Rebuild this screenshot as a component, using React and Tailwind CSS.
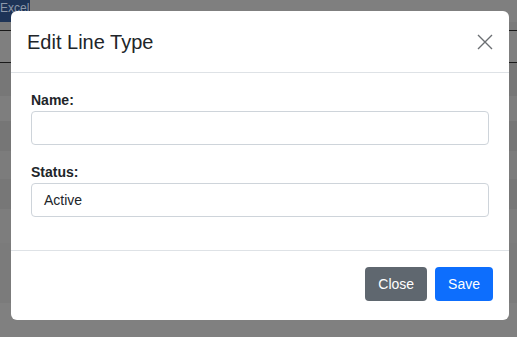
import React from "react";

export default function App() {
  const rows = [
    "bg-[#777777] h-[33px]",
    "bg-[#7e7e7e] h-[25px]",
    "bg-[#767676] h-[30px]",
    "bg-[#7c7c7c] h-[28px]",
    "bg-[#777777] h-[30px]",
    "bg-[#7d7d7d] h-[34px]",
    "bg-[#7b7b7b] h-[60px]",
  ];
  return (
    <div
      className="relative w-[517px] h-[337px] overflow-hidden bg-[#808080] text-[#212529]"
      style={{ fontFamily: '"Liberation Sans", Arial, Helvetica, sans-serif' }}
    >
      {/* background page (dimmed) */}
      <div className="flex flex-col">
        <div className="flex h-[22px] bg-[#7f7f7f]">
          <div className="w-[30px] h-[22px] bg-[#1e3457] text-[#8d98aa] text-[12px] leading-[16px] overflow-hidden whitespace-nowrap pl-[0px]">
            Excel
          </div>
        </div>
        <div className="h-[8px] bg-[#7a7a7a]" />
        <div className="h-[1px] bg-[#1a1a1a]" />
        <div className="h-[31px] bg-[#7f7f7f]" />
        <div className="h-[1px] bg-[#1a1a1a]" />
        {rows.map((r, i) => (
          <div key={i} className={r} />
        ))}
      </div>

      {/* modal */}
      <div className="absolute left-[11px] top-[11px] w-[498px] h-[309px] bg-white rounded-[6px] flex flex-col">
        <div className="h-[62px] flex items-center justify-between pl-[16px] pr-[16px] border-b border-[#dee2e6]">
          <h5 className="text-[20px] leading-[30px] font-normal">Edit Line Type</h5>
          <button className="w-[16px] h-[16px] flex items-center justify-center mr-[0px]">
            <svg width="16" height="16" viewBox="0 0 16 16">
              <path d="M1 1L15 15M15 1L1 15" stroke="#6b6e72" strokeWidth="1.4" />
            </svg>
          </button>
        </div>
        <div className="flex-1 px-[20px] pt-[17px] border-b border-[#dee2e6]">
          <label className="block text-[14px] leading-[20px] font-bold mb-[1px]">Name:</label>
          <input
            className="block w-full h-[34px] border border-[#ced4da] rounded-[4px] px-[12px] text-[14px] outline-none"
          />
          <label className="block text-[14px] leading-[20px] font-bold mt-[17px] mb-[1px]">Status:</label>
          <div className="w-full h-[34px] border border-[#ced4da] rounded-[4px] px-[12px] text-[14px] leading-[32px]">
            Active
          </div>
        </div>
        <div className="h-[69px] flex items-start justify-end gap-[8px] pt-[16px] pr-[16px]">
          <button className="h-[34px] px-[13px] rounded-[4px] bg-[#5f676f] text-white text-[14px]">Close</button>
          <button className="h-[34px] px-[13px] rounded-[4px] bg-[#0d6efd] text-white text-[14px]">Save</button>
        </div>
      </div>
    </div>
  );
}
